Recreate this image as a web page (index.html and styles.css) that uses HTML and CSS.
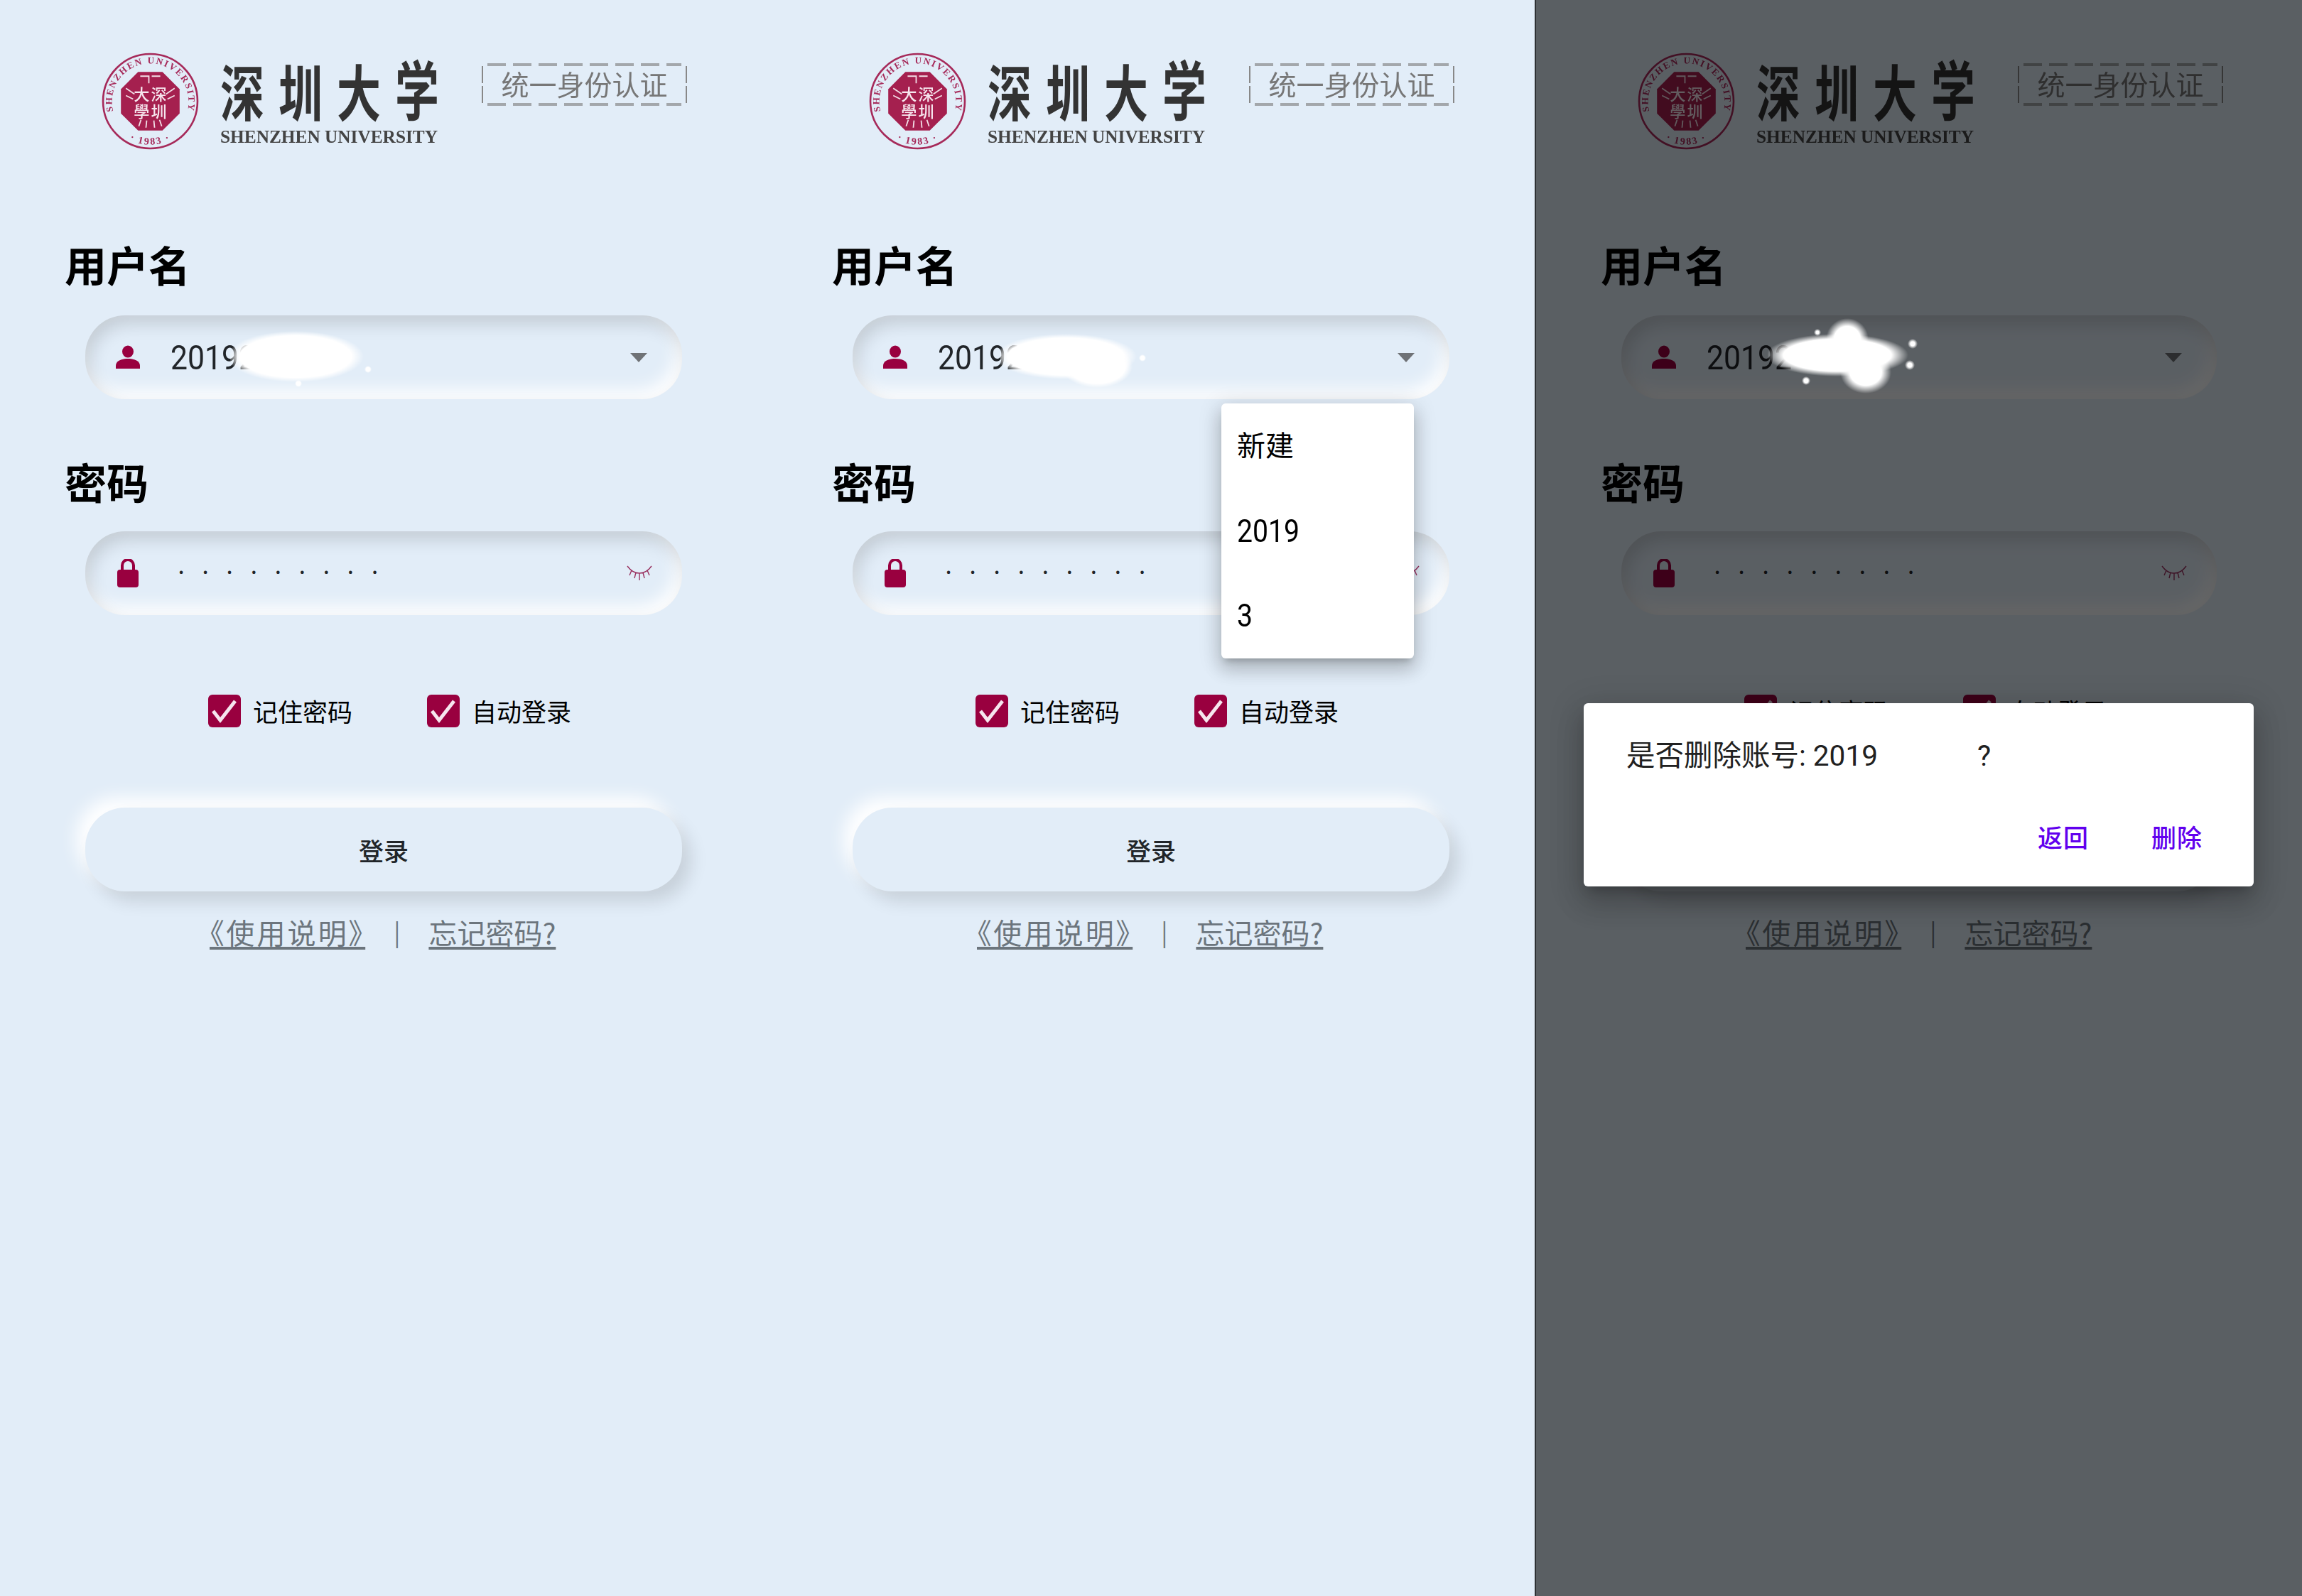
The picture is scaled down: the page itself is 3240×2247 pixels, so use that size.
FILE: index.html

```html
<!DOCTYPE html>
<html lang="zh-CN">
<head>
    <meta charset="UTF-8">
    <title>统一身份认证</title>
    <link rel="stylesheet" href="styles.css">
</head>
<body>
<!-- shared drawings -->
<svg class="defs" aria-hidden="true">
    <symbol id="seal" viewBox="0 0 136 136">
        <circle cx="68" cy="68" r="66" fill="none" stroke="#a62a5a" stroke-width="2.6"/>
        <path id="sealTop" d="M22 96 A53.5 53.5 0 1 1 114 96" fill="none"/>
        <path id="sealBottom" d="M26 112 A61 61 0 0 0 110 112" fill="none"/>
        <text class="seal-ring"><textPath href="#sealTop" startOffset="50%" text-anchor="middle">SHENZHEN UNIVERSITY</textPath></text>
        <text class="seal-year"><textPath href="#sealBottom" startOffset="50%" text-anchor="middle">· 1983 ·</textPath></text>
        <polygon points="51,27 85,27 109,51 109,85 85,109 51,109 27,85 27,51" fill="#a5204f"/>
        <path d="M54 33h12v10M82 33H70M34 50l12 8M34 60l10 5M102 50l-12 8M102 60l-10 5M52 103l3-9M62 105l1-10M74 105l-1-10M84 103l-3-9" fill="none" stroke="#f2dfe7" stroke-width="1.8"/>
        <text class="seal-char" x="45" y="67">大</text>
        <text class="seal-char" x="69" y="67">深</text>
        <text class="seal-char" x="45" y="90">學</text>
        <text class="seal-char" x="69" y="90">圳</text>
    </symbol>
    <symbol id="wordmark" viewBox="0 0 308 122">
        <text class="word-cn" transform="translate(0 81) scale(.86 1.2)" x="0" y="0">深</text>
        <text class="word-cn" transform="translate(82 81) scale(.86 1.2)" x="0" y="0">圳</text>
        <text class="word-cn" transform="translate(164 81) scale(.86 1.2)" x="0" y="0">大</text>
        <text class="word-cn" transform="translate(246 79) scale(.86 1.26)" x="0" y="0">学</text>
        <text class="word-en" x="0" y="118" textLength="306" lengthAdjust="spacingAndGlyphs">SHENZHEN UNIVERSITY</text>
    </symbol>
    <symbol id="user" viewBox="0 0 34 34">
        <ellipse cx="17" cy="9" rx="8" ry="8.6" fill="#99003f"/>
        <path d="M0 33v-4c0-7 8-10 17-10s17 3 17 10v4z" fill="#99003f"/>
    </symbol>
    <symbol id="lock" viewBox="0 0 30 40">
        <path d="M7 17V9a8 8 0 0 1 16 0v8" fill="none" stroke="#99003f" stroke-width="4"/>
        <rect x="0" y="15" width="30" height="25" rx="4" fill="#99003f"/>
    </symbol>
    <symbol id="eye" viewBox="0 0 36 22">
        <path d="M1 1c5 7 10 10 17 10s12-3 17-10M7 7L4 14M13 10l-2 8M18 11v10M23 10l2 8M29 7l3 7" fill="none" stroke="#99305f" stroke-width="1.4"/>
    </symbol>
    <symbol id="check" viewBox="0 0 46 46">
        <rect width="46" height="46" rx="6" fill="#99003f"/>
        <path d="M7 23l10 13L38 9" fill="none" stroke="#f6e6ee" stroke-width="5"/>
    </symbol>
</svg>

<div class="page">
    <!-- 登录 -->
    <section class="panel">
        <div class="logo">
            <svg class="seal"><use href="#seal"/></svg>
            <svg class="wordmark"><use href="#wordmark"/></svg>
            <div class="auth">统一身份认证</div>
        </div>
        <div class="label">用户名</div>
        <div class="field">
            <svg class="field-icon"><use href="#user"/></svg>
            <span class="field-text">20192</span>
            <i class="caret"></i>
            <i class="smudge smudge-a"></i>
        </div>
        <div class="label label-pwd">密码</div>
        <div class="field">
            <svg class="field-icon lock-icon"><use href="#lock"/></svg>
            <span class="field-dots">.........</span>
            <svg class="eye-icon"><use href="#eye"/></svg>
        </div>
        <div class="checks">
            <label class="check"><svg class="check-box"><use href="#check"/></svg>记住密码</label>
            <label class="check"><svg class="check-box"><use href="#check"/></svg>自动登录</label>
        </div>
        <button class="login">登录</button>
        <div class="links">
            <a href="#" class="manual">《使用说明》</a>
            <span class="sep">|</span>
            <a href="#">忘记密码?</a>
        </div>
    </section>

    <!-- 账号下拉 -->
    <section class="panel">
        <div class="logo">
            <svg class="seal"><use href="#seal"/></svg>
            <svg class="wordmark"><use href="#wordmark"/></svg>
            <div class="auth">统一身份认证</div>
        </div>
        <div class="label">用户名</div>
        <div class="field">
            <svg class="field-icon"><use href="#user"/></svg>
            <span class="field-text">20192</span>
            <i class="caret"></i>
            <i class="smudge smudge-b"></i>
        </div>
        <div class="label label-pwd">密码</div>
        <div class="field">
            <svg class="field-icon lock-icon"><use href="#lock"/></svg>
            <span class="field-dots">.........</span>
            <svg class="eye-icon"><use href="#eye"/></svg>
        </div>
        <div class="checks">
            <label class="check"><svg class="check-box"><use href="#check"/></svg>记住密码</label>
            <label class="check"><svg class="check-box"><use href="#check"/></svg>自动登录</label>
        </div>
        <button class="login">登录</button>
        <div class="links">
            <a href="#" class="manual">《使用说明》</a>
            <span class="sep">|</span>
            <a href="#">忘记密码?</a>
        </div>
        <ul class="menu">
            <li>新建</li>
            <li><span class="digits">2019</span></li>
            <li><span class="digits">3</span></li>
        </ul>
    </section>

    <!-- 删除账号 -->
    <section class="panel panel-dim">
        <div class="logo">
            <svg class="seal"><use href="#seal"/></svg>
            <svg class="wordmark"><use href="#wordmark"/></svg>
            <div class="auth">统一身份认证</div>
        </div>
        <div class="label">用户名</div>
        <div class="field">
            <svg class="field-icon"><use href="#user"/></svg>
            <span class="field-text">20192</span>
            <i class="caret"></i>
        </div>
        <div class="label label-pwd">密码</div>
        <div class="field">
            <svg class="field-icon lock-icon"><use href="#lock"/></svg>
            <span class="field-dots">.........</span>
            <svg class="eye-icon"><use href="#eye"/></svg>
        </div>
        <div class="checks">
            <label class="check"><svg class="check-box"><use href="#check"/></svg>记住密码</label>
            <label class="check"><svg class="check-box"><use href="#check"/></svg>自动登录</label>
        </div>
        <button class="login">登录</button>
        <div class="links">
            <a href="#" class="manual">《使用说明》</a>
            <span class="sep">|</span>
            <a href="#">忘记密码?</a>
        </div>
        <div class="scrim"></div>
        <i class="smudge smudge-c"></i>
        <div class="dialog">
            <p class="dialog-text">是否删除账号: 2019<span class="dialog-gap"></span>?</p>
            <div class="dialog-actions">
                <a href="#">返回</a>
                <a href="#">删除</a>
            </div>
        </div>
    </section>
</div>
</body>
</html>
```

FILE: styles.css

```css
@charset "UTF-8";
/* reset */
body,ul,p{margin:0;padding:0}
ul{list-style:none}
a{text-decoration:none}
i{font-style:normal}
button{border:0;outline:none}

body{
    font-family:Roboto,"Noto Sans CJK SC",sans-serif;
    background:#e2edf8;
    color:#212529;
}
.defs{
    position:absolute;
    width:0;
    height:0;
}
.page{
    display:flex;
    width:3240px;
    height:2247px;
    overflow:hidden;
}
.panel{
    position:relative;
    flex:0 0 1080px;
    display:flex;
    flex-direction:column;
    box-sizing:border-box;
    height:2247px;
    background:#e2edf8;
}

/* logo */
.logo{
    display:flex;
    align-items:flex-start;
    height:137px;
    margin:74px 0 0 143px;
}
.seal{
    width:137px;
    height:137px;
    flex:none;
    filter:blur(.6px);
}
.wordmark{
    width:308px;
    height:122px;
    margin:9px 0 0 30px;
    flex:none;
    filter:blur(.5px);
}
.seal-ring{
    font:700 13px "Liberation Serif",serif;
    letter-spacing:2px;
    fill:#a62a5a;
}
.seal-year{
    font:700 14px "Liberation Serif",serif;
    letter-spacing:2px;
    fill:#a62a5a;
}
.seal-char{
    font:500 22px "Noto Sans CJK TC",sans-serif;
    fill:#f6e6ee;
}
.word-cn{
    font:700 72px "Noto Sans CJK SC",sans-serif;
    fill:#333;
}
.word-en{
    font:700 26px "Liberation Serif",serif;
    fill:#444;
}
.auth{
    box-sizing:border-box;
    width:289px;
    height:60px;
    margin:15px 0 0 60px;
    text-align:center;
    font:400 39px/56px "Noto Sans CJK SC",sans-serif;
    color:#777;
    filter:blur(.4px);
    background:
        repeating-linear-gradient(90deg,#a3a7ab 0 26px,transparent 26px 36px) 8px 0/273px 4px no-repeat,
        repeating-linear-gradient(90deg,#a3a7ab 0 26px,transparent 26px 36px) 8px 100%/273px 4px no-repeat,
        repeating-linear-gradient(180deg,#888 0 24px,transparent 24px 28px) 0 4px/2px 52px no-repeat,
        repeating-linear-gradient(180deg,#888 0 24px,transparent 24px 28px) 100% 4px/2px 52px no-repeat;
}

/* form */
.label{
    margin:131px 0 0 91px;
    font:700 59px/60px "Noto Sans CJK SC",sans-serif;
    color:#000;
}
.label-pwd{
    margin-top:86px;
    margin-bottom:-2px;
}
.field{
    position:relative;
    display:flex;
    align-items:center;
    height:118px;
    margin:42px 120px 0;
    border-radius:56px;
    box-shadow:inset 6px 12px 24px rgba(0,0,0,.14),inset -8px -12px 24px #fff;
}
.field-icon{
    width:34px;
    height:34px;
    margin-left:43px;
    flex:none;
}
.lock-icon{
    width:30px;
    height:40px;
    margin-left:45px;
}
.field-text,.digits{
    display:inline-block;
    font-size:48px;
    transform:scaleX(.89);
    transform-origin:0 50%;
}
.digits{
    font-size:44px;
}
.field-text{
    margin-left:43px;
    color:#212529;
}
.caret{
    width:0;
    height:0;
    margin-left:auto;
    margin-right:49px;
    border-style:solid;
    border-width:13px 12px 0;
    border-color:#6f7276 transparent transparent;
}
.field-dots{
    margin-left:55px;
    padding-bottom:24px;
    font-size:40px;
    line-height:32px;
    letter-spacing:23.5px;
    color:#212529;
}
.eye-icon{
    width:36px;
    height:22px;
    margin-left:auto;
    margin-right:42px;
}
.checks{
    display:flex;
    gap:105px;
    margin:112px 0 0 293px;
    height:46px;
}
.check{
    display:flex;
    align-items:center;
    gap:17px;
    font:400 35px/46px "Noto Sans CJK SC",sans-serif;
    color:#000;
}
.check-box{
    width:46px;
    height:46px;
}
.login{
    display:block;
    height:118px;
    margin:113px 120px 0;
    border-radius:56px;
    background:#e2edf8;
    box-shadow:12px 14px 24px rgba(0,0,0,.12),-12px -14px 24px #fff;
    font:500 35px "Noto Sans CJK SC",sans-serif;
    color:#212529;
}
.links{
    display:flex;
    align-items:center;
    gap:40px;
    height:48px;
    margin:33px 0 0 295px;
    font:400 40px/48px "Noto Sans CJK SC",sans-serif;
    color:#6c757d;
}
.links a{
    color:#6c757d;
    text-decoration:underline;
    text-underline-offset:4px;
}
.manual{
    font-feature-settings:"palt";
    letter-spacing:3.2px;
}
.sep{
    font-size:34px;
}

/* 打码 */
.smudge{
    position:absolute;
    display:block;
    background-repeat:no-repeat;
}
.smudge-a{
    left:204px;
    top:14px;
    width:200px;
    height:92px;
    background-image:
        radial-gradient(circle at 194px 62px,#fff 0 3px,transparent 5px),
        radial-gradient(circle at 96px 82px,#fff 0 3px,transparent 5px),
        radial-gradient(ellipse 96px 36px at 92px 44px,#fff 82%,transparent);
}
.smudge-b{
    left:208px;
    top:16px;
    width:210px;
    height:94px;
    background-image:
        radial-gradient(circle at 200px 44px,#fff 0 3px,transparent 5px),
        radial-gradient(ellipse 50px 30px at 136px 56px,#fff 80%,transparent),
        radial-gradient(ellipse 100px 32px at 92px 42px,#fff 82%,transparent);
}
.smudge-c{
    left:326px;
    top:448px;
    width:224px;
    height:108px;
    background-image:
        radial-gradient(circle at 204px 36px,#fff 0 3px,transparent 7px),
        radial-gradient(circle at 200px 66px,#fff 0 3px,transparent 7px),
        radial-gradient(circle at 54px 88px,#fff 0 3px,transparent 6px),
        radial-gradient(circle at 70px 20px,#fff 0 2px,transparent 5px),
        radial-gradient(ellipse 30px 30px at 112px 30px,#fff 62%,transparent),
        radial-gradient(ellipse 36px 30px at 138px 76px,#fff 62%,transparent),
        radial-gradient(ellipse 100px 30px at 98px 52px,#fff 76%,transparent);
}

/* 账号菜单 */
.menu{
    position:absolute;
    left:639px;
    top:568px;
    width:271px;
    padding:0;
    background:#fff;
    border-radius:6px;
    box-shadow:0 8px 10px -5px rgba(0,0,0,.2),0 16px 24px 2px rgba(0,0,0,.14),0 6px 30px 5px rgba(0,0,0,.12);
}
.menu li{
    height:119.5px;
    padding-left:22px;
    font:400 40px/121px Roboto,"Noto Sans CJK SC",sans-serif;
    color:#000;
}

/* 删除确认 */
.panel-dim{
    border-left:2px solid #2e3134;
}
.scrim{
    position:absolute;
    inset:0;
    background:rgba(0,0,0,.6);
}
.dialog{
    position:absolute;
    left:67px;
    top:990px;
    box-sizing:border-box;
    width:943px;
    height:258px;
    padding:50px 60px 0;
    background:#fff;
    border-radius:6px;
    box-shadow:0 11px 15px -7px rgba(0,0,0,.2),0 24px 38px 3px rgba(0,0,0,.14),0 9px 46px 8px rgba(0,0,0,.12);
}
.dialog-text{
    font:400 40.5px/48px Roboto,"Noto Sans CJK SC",sans-serif;
    color:#212121;
}
.dialog-gap{
    display:inline-block;
    width:140px;
}
.dialog-actions{
    display:flex;
    justify-content:flex-end;
    gap:88px;
    margin-top:68px;
    padding-right:12px;
}
.dialog-actions a{
    font:500 35px/44px "Noto Sans CJK SC",sans-serif;
    letter-spacing:1px;
    color:#6200ee;
}
```
